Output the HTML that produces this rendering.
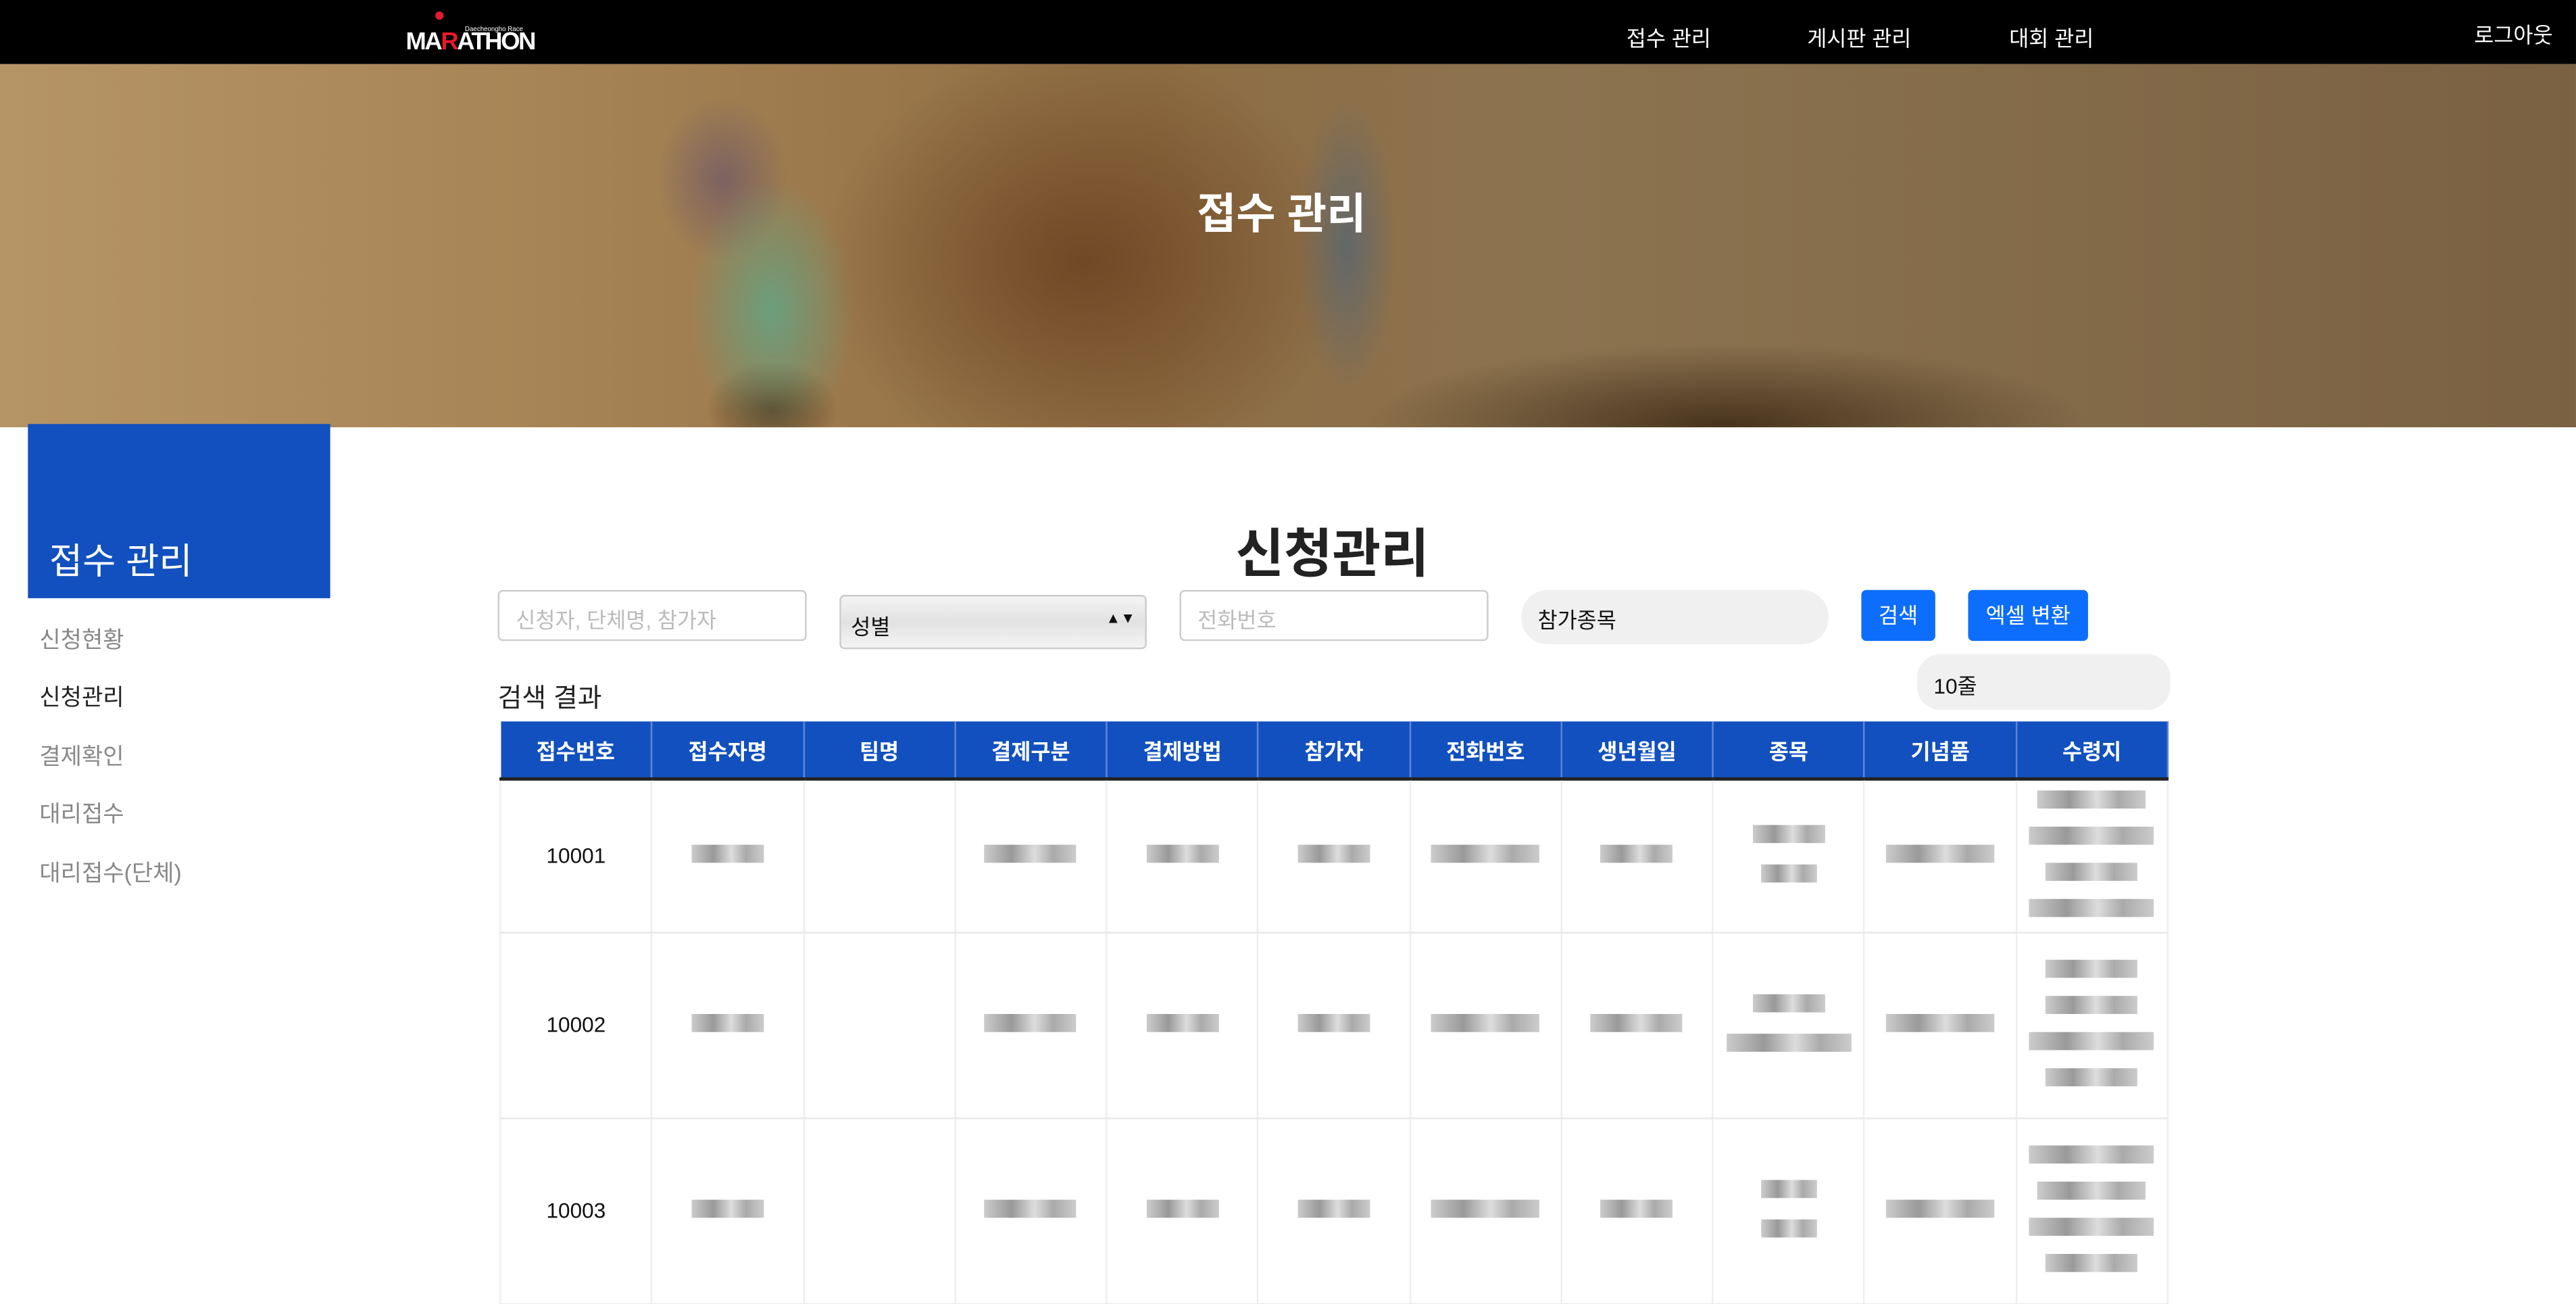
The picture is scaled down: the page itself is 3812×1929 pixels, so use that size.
<!DOCTYPE html>
<html><head><meta charset="utf-8"><style>
html,body{margin:0;padding:0;width:3812px;height:1926px;overflow:hidden;background:#fff}
#w{position:absolute;left:0;top:0;width:1568px;height:792px;transform:scale(2.4311);transform-origin:0 0;font-family:"Liberation Sans","Noto Sans CJK KR",sans-serif;color:#222}
.a{position:absolute}
.nav{color:#fff;font-size:13px;top:13px}
.hero{left:0;top:39px;width:1568px;height:221px;overflow:hidden;
background:
radial-gradient(ellipse 50px 80px at 470px 150px,rgba(90,170,140,.75),transparent),
radial-gradient(ellipse 40px 50px at 440px 70px,rgba(100,80,110,.6),transparent),
radial-gradient(ellipse 30px 90px at 820px 110px,rgba(80,100,120,.7),transparent),
radial-gradient(ellipse 40px 30px at 470px 210px,rgba(80,50,25,.8),transparent),
radial-gradient(ellipse 160px 130px at 660px 120px,rgba(110,70,35,.95),transparent),
radial-gradient(ellipse 220px 50px at 1050px 220px,rgba(60,40,20,.85),transparent),
linear-gradient(90deg,#b59466 0%,#a88556 20%,#8e6d43 45%,#8c7350 60%,#7a6142 100%)}
.menu{left:24px;font-size:14px;color:#888}
.box{position:absolute;box-sizing:border-box}
.inp{border:1px solid #ccc;border-radius:3px;height:31px;font-size:13px;color:#bbb;padding:7px 10px}
.btn{background:#0d6efd;color:#fff;border-radius:3px;font-size:13px;text-align:center;line-height:31px;height:31px;top:359px}
table{position:absolute;left:304px;top:439px;width:1016px;border-collapse:collapse;table-layout:fixed}
th{background:#1150be;color:#fff;font-size:13px;height:32px;border-right:1px solid #5d85d0;border-bottom:2px solid #222;font-weight:bold}
td{border-right:1px solid #eee;border-bottom:1px solid #e8e8e8;font-size:13px;text-align:center;color:#111;position:relative}
.g{display:inline-block;height:11px;background:linear-gradient(90deg,#ccc,#999 30%,#ddd 55%,#aaa 75%,#ccc);}
</style></head><body><div id="w">
<div class="a" style="left:0;top:0;width:1568px;height:39px;background:#000"></div>
<div class="a" style="left:247px;top:17px;font-size:15px;font-weight:bold;color:#fff;letter-spacing:-1px">MA<span style="color:#e8192c">R</span>ATHON</div>
<div class="a" style="left:265px;top:7px;width:5px;height:5px;border-radius:50%;background:#e8192c"></div>
<div class="a" style="left:283px;top:15px;font-size:4px;color:#fff">Daecheongho Race</div>
<div class="a nav" style="left:990px">접수 관리</div>
<div class="a nav" style="left:1100px">게시판 관리</div>
<div class="a nav" style="left:1223px">대회 관리</div>
<div class="a nav" style="left:1506px;top:11px">로그아웃</div>
<div class="a hero"></div>
<div class="a" style="left:0;top:110px;width:1560px;text-align:center;color:#fff;font-size:26px;font-weight:bold">접수 관리</div>
<div class="a" style="left:17px;top:258px;width:184px;height:106px;background:#1150be"></div>
<div class="a" style="left:30px;top:324px;color:#fff;font-size:22px">접수 관리</div>
<div class="a menu" style="top:379px">신청현황</div>
<div class="a menu" style="top:414px;color:#222">신청관리</div>
<div class="a menu" style="top:450px">결제확인</div>
<div class="a menu" style="top:485px">대리접수</div>
<div class="a menu" style="top:521px">대리접수(단체)</div>
<div class="a" style="left:600px;width:422px;text-align:center;top:312px;font-size:32px;font-weight:bold">신청관리</div>
<div class="box inp" style="left:303px;top:359px;width:188px">신청자, 단체명, 참가자</div>
<div class="box" style="left:511px;top:362px;width:187px;height:33px;border-radius:3px;background:linear-gradient(#f4f4f4,#e2e2e2 50%,#f4f4f4);border:1px solid #ccc;font-size:13px;color:#111;padding:8px 6px">성별<span style="float:right;font-size:9px">▲▼</span></div>
<div class="box inp" style="left:718px;top:359px;width:188px">전화번호</div>
<div class="box" style="left:926px;top:359px;width:187px;height:33px;border-radius:16px;background:#f0f0f0;font-size:13px;color:#111;padding:8px 10px">참가종목</div>
<div class="a btn" style="left:1133px;width:45px">검색</div>
<div class="a btn" style="left:1198px;width:73px">엑셀 변환</div>
<div class="box" style="left:1167px;top:398px;width:154px;height:34px;border-radius:14px;background:#f0f0f0;font-size:13px;color:#111;padding:9px 10px">10줄</div>
<div class="a" style="left:303px;top:411px;font-size:16px">검색 결과</div>
<table>
<tr><th>접수번호</th><th>접수자명</th><th>팀명</th><th>결제구분</th><th>결제방법</th><th>참가자</th><th>전화번호</th><th>생년월일</th><th>종목</th><th>기념품</th><th>수령지</th></tr>
<tr style="height:93px"><td style="border-left:1px solid #eee">10001</td><td><span class="g" style="width:44px"></span></td><td></td><td><span class="g" style="width:56px"></span></td><td><span class="g" style="width:44px"></span></td><td><span class="g" style="width:44px"></span></td><td><span class="g" style="width:66px"></span></td><td><span class="g" style="width:44px"></span></td><td><span class="g" style="width:44px"></span><br><span class="g" style="width:34px;margin-top:10px"></span></td><td><span class="g" style="width:66px"></span></td><td><span class="g" style="width:66px"></span><br><span class="g" style="width:76px;margin-top:8px"></span><br><span class="g" style="width:56px;margin-top:8px"></span><br><span class="g" style="width:76px;margin-top:8px"></span></td></tr>
<tr style="height:113px"><td style="border-left:1px solid #eee">10002</td><td><span class="g" style="width:44px"></span></td><td></td><td><span class="g" style="width:56px"></span></td><td><span class="g" style="width:44px"></span></td><td><span class="g" style="width:44px"></span></td><td><span class="g" style="width:66px"></span></td><td><span class="g" style="width:56px"></span></td><td><span class="g" style="width:44px"></span><br><span class="g" style="width:76px;margin-top:10px"></span></td><td><span class="g" style="width:66px"></span></td><td><span class="g" style="width:56px"></span><br><span class="g" style="width:56px;margin-top:8px"></span><br><span class="g" style="width:76px;margin-top:8px"></span><br><span class="g" style="width:56px;margin-top:8px"></span></td></tr>
<tr style="height:113px"><td style="border-left:1px solid #eee">10003</td><td><span class="g" style="width:44px"></span></td><td></td><td><span class="g" style="width:56px"></span></td><td><span class="g" style="width:44px"></span></td><td><span class="g" style="width:44px"></span></td><td><span class="g" style="width:66px"></span></td><td><span class="g" style="width:44px"></span></td><td><span class="g" style="width:34px"></span><br><span class="g" style="width:34px;margin-top:10px"></span></td><td><span class="g" style="width:66px"></span></td><td><span class="g" style="width:76px"></span><br><span class="g" style="width:66px;margin-top:8px"></span><br><span class="g" style="width:76px;margin-top:8px"></span><br><span class="g" style="width:56px;margin-top:8px"></span></td></tr>
</table>
</div></body></html>
